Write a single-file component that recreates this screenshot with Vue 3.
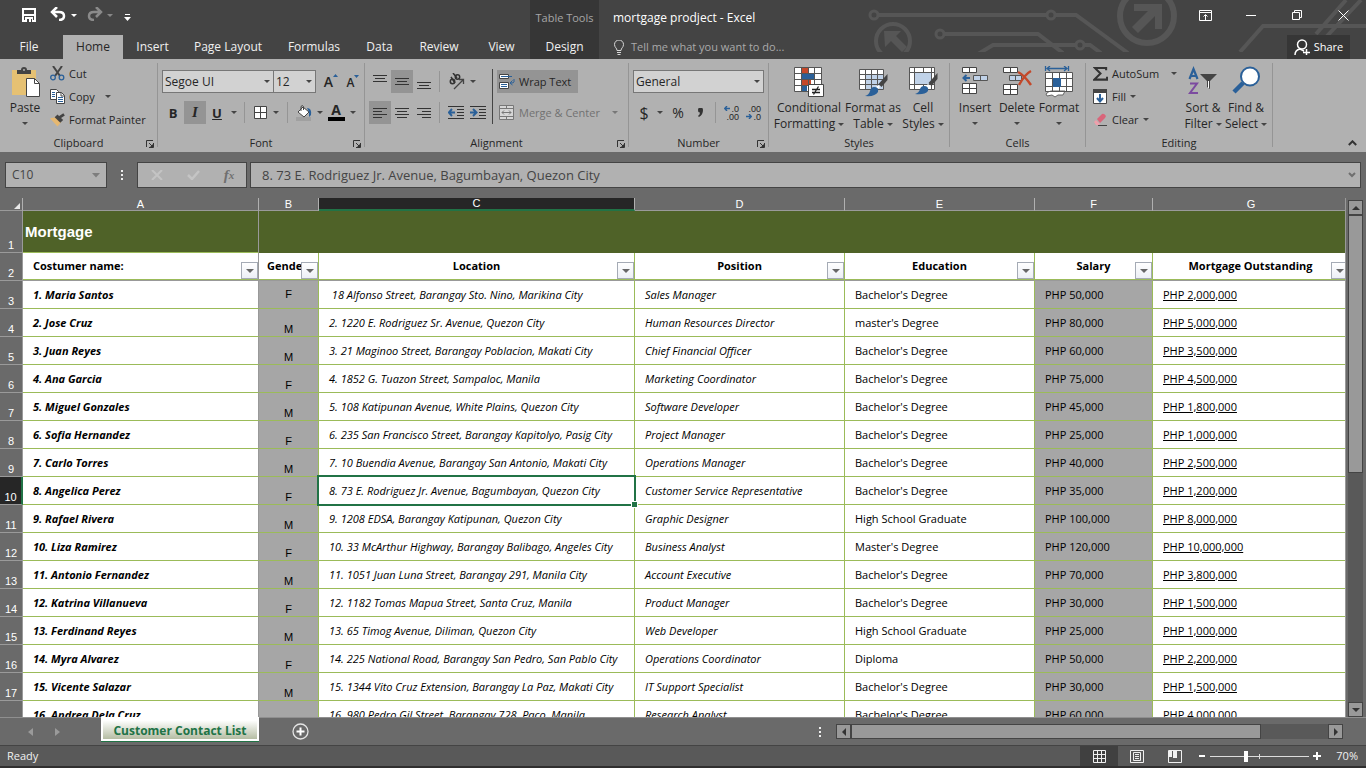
<script setup>
import { ref } from 'vue'

const tabs = [
  { name: 'File', cls: 'file' },
  { name: 'Home', cls: 'home' },
  { name: 'Insert', cls: 'insert' },
  { name: 'Page Layout', cls: 'layout' },
  { name: 'Formulas', cls: 'formulas' },
  { name: 'Data', cls: 'data' },
  { name: 'Review', cls: 'review' },
  { name: 'View', cls: 'view' }
]

const columns = [
  { letter: 'A', title: 'Costumer name:' },
  { letter: 'B', title: 'Gender' },
  { letter: 'C', title: 'Location' },
  { letter: 'D', title: 'Position' },
  { letter: 'E', title: 'Education' },
  { letter: 'F', title: 'Salary' },
  { letter: 'G', title: 'Mortgage Outstanding' }
]

const rows = [
  ['1. Maria Santos', 'F', ' 18 Alfonso Street, Barangay Sto. Nino, Marikina City', 'Sales Manager', "Bachelor's Degree", 'PHP 50,000', 'PHP 2,000,000'],
  ['2. Jose Cruz', 'M', '2. 1220 E. Rodriguez Sr. Avenue, Quezon City', 'Human Resources Director', "master's Degree", 'PHP 80,000', 'PHP 5,000,000'],
  ['3. Juan Reyes', 'M', '3. 21 Maginoo Street, Barangay Poblacion, Makati City', 'Chief Financial Officer', "Bachelor's Degree", 'PHP 60,000', 'PHP 3,500,000'],
  ['4. Ana Garcia', 'F', '4. 1852 G. Tuazon Street, Sampaloc, Manila', 'Marketing Coordinator', "Bachelor's Degree", 'PHP 75,000', 'PHP 4,500,000'],
  ['5. Miguel Gonzales', 'M', '5. 108 Katipunan Avenue, White Plains, Quezon City', 'Software Developer', "Bachelor's Degree", 'PHP 45,000', 'PHP 1,800,000'],
  ['6. Sofia Hernandez', 'F', '6. 235 San Francisco Street, Barangay Kapitolyo, Pasig City', 'Project Manager', "Bachelor's Degree", 'PHP 25,000', 'PHP 1,000,000'],
  ['7. Carlo Torres', 'M', '7. 10 Buendia Avenue, Barangay San Antonio, Makati City', 'Operations Manager', "Bachelor's Degree", 'PHP 40,000', 'PHP 2,500,000'],
  ['8. Angelica Perez', 'F', '8. 73 E. Rodriguez Jr. Avenue, Bagumbayan, Quezon City', 'Customer Service Representative', "Bachelor's Degree", 'PHP 35,000', 'PHP 1,200,000'],
  ['9. Rafael Rivera', 'M', '9. 1208 EDSA, Barangay Katipunan, Quezon City', 'Graphic Designer', 'High School Graduate', 'PHP 100,000', 'PHP 8,000,000'],
  ['10. Liza Ramirez', 'F', '10. 33 McArthur Highway, Barangay Balibago, Angeles City', 'Business Analyst', "Master's Degree", 'PHP 120,000', 'PHP 10,000,000'],
  ['11. Antonio Fernandez', 'M', '11. 1051 Juan Luna Street, Barangay 291, Manila City', 'Account Executive', "Bachelor's Degree", 'PHP 70,000', 'PHP 3,800,000'],
  ['12. Katrina Villanueva', 'F', '12. 1182 Tomas Mapua Street, Santa Cruz, Manila', 'Product Manager', "Bachelor's Degree", 'PHP 30,000', 'PHP 1,500,000'],
  ['13. Ferdinand Reyes', 'M', '13. 65 Timog Avenue, Diliman, Quezon City', 'Web Developer', 'High School Graduate', 'PHP 25,000', 'PHP 1,000,000'],
  ['14. Myra Alvarez', 'F', '14. 225 National Road, Barangay San Pedro, San Pablo City', 'Operations Coordinator', 'Diploma', 'PHP 50,000', 'PHP 2,200,000'],
  ['15. Vicente Salazar', 'M', '15. 1344 Vito Cruz Extension, Barangay La Paz, Makati City', 'IT Support Specialist', "Bachelor's Degree", 'PHP 30,000', 'PHP 1,500,000'],
  ['16. Andrea Dela Cruz', '', '16. 980 Pedro Gil Street, Barangay 728, Paco, Manila', 'Research Analyst', "Bachelor's Degree", 'PHP 60,000', 'PHP 4,000,000']
]

const activeRow = ref(10)
const formula = ref('8. 73 E. Rodriguez Jr. Avenue, Bagumbayan, Quezon City')
const zoom = ref(70)
</script>

<template>
  <div class="excel">
    <header class="head">
      <svg class="circuit" viewBox="866 0 500 52" aria-hidden="true">
        <g fill="none" stroke="#565656" stroke-width="4">
          <g stroke-width="3"><circle cx="874" cy="15" r="4" /><circle cx="940" cy="34" r="4" /><circle cx="1051" cy="15" r="4" /><circle cx="1080" cy="45" r="4" /></g>
          <path d="M878 15H1047M1055 15H1076L1128 53M944 34H1038L1063 53M978 54L993 45H1076M1084 45H1090L1101 53M1240 52L1263 26H1366M1316 34L1346 0M1327 36L1361 0" />
          <circle cx="893" cy="41" r="17" />
          <circle cx="1147" cy="16" r="27" stroke-width="6" />
        </g>
        <path fill="#565656" d="M884 31h17l-5 5 11 11-5 5-11-11-6 6zM1134 4h28v25h-7V16l-17 17-6-6 16-16h-14z" />
      </svg>
      <div class="titlebar">
        <div class="qat">
          <button class="q save" aria-label="Save"><svg width="14" height="14" viewBox="0 0 14 14"><path d="M1 1h12v12H1z" fill="none" stroke="#fff" stroke-width="2" /><path d="M2 7h10" stroke="#fff" stroke-width="2" /><path d="M3 9h8v5H3z" fill="#fff" /><path d="M5 11h2v3H5zM9 11h1v3H9z" fill="#444" /></svg></button>
          <button class="q undo" aria-label="Undo"><svg width="16" height="14" viewBox="0 0 16 14"><path d="M7 0L2 5l5 5" fill="none" stroke="#fff" stroke-width="2.500" /><path d="M2 5h7q5 0 5 4t-5 4" fill="none" stroke="#fff" stroke-width="2.500" /></svg></button>
          <button class="q ar" aria-label="Undo history"><i class="dd lt"></i></button>
          <button class="q redo" aria-label="Redo"><svg width="16" height="14" viewBox="0 0 16 14"><path d="M9 0l5 5-5 5M14 5H7Q2 5 2 9t5 4" fill="none" stroke="#8a8a8a" stroke-width="2.500" /></svg></button>
          <button class="q ar" aria-label="Redo history"><i class="dd dim"></i></button>
          <button class="q cust" aria-label="Customize Quick Access Toolbar"><svg width="7" height="7" viewBox="0 0 7 7"><path d="M1 0h5v1H1zM0 3h7L3.500 7z" fill="#fff" /></svg></button>
        </div>
        <div class="tools">Table Tools</div>
        <div class="doc">mortgage prodject - Excel</div>
        <div class="win">
          <button aria-label="Ribbon Display Options"><svg width="13" height="11" viewBox="0 0 13 11"><path d="M.5.500h12v10H.5zM0 2.500h13M6.500 10V5M4.500 6.500l2-2 2 2" fill="none" stroke="#fff" /></svg></button>
          <button aria-label="Minimize"><svg width="10" height="10" viewBox="0 0 10 10"><path d="M0 5.500h10" stroke="#fff" /></svg></button>
          <button aria-label="Restore"><svg width="10" height="10" viewBox="0 0 10 10"><path d="M.5 2.500h7v7h-7zM2.500 2V.500h7v7H8" fill="none" stroke="#fff" /></svg></button>
          <button aria-label="Close"><svg width="11" height="11" viewBox="0 0 11 11"><path d="M.5.500l10 10M10.500.500l-10 10" stroke="#fff" /></svg></button>
        </div>
      </div>
      <nav class="tabs">
        <button v-for="t in tabs" :key="t.name" class="tab" :class="t.cls">{{ t.name }}</button>
        <button class="tab design">Design</button>
        <button class="tell"><svg width="12" height="15" viewBox="0 0 12 15"><path d="M4 10.500C4 8 1.500 7.500 1.500 4.500a4 4 0 0 1 9 0C10.500 7.500 8 8 8 10.500zM4 12.500h4M4.500 14.500h3" fill="none" stroke="#d8d8d8" /></svg>Tell me what you want to do...</button>
        <button class="share"><svg width="16" height="17" viewBox="0 0 16 17"><circle cx="8" cy="5.500" r="4.500" fill="none" stroke="#fff" stroke-width="1.500" /><path d="M1 16q0-5 5-6l4 2M12.500 10v6M9 13.500h7" fill="none" stroke="#fff" stroke-width="1.500" /></svg>Share</button>
      </nav>
    </header>

    <section class="ribbon">
      <div class="group clip">
        <div class="body">
          <button class="big paste"><svg width="30" height="32" viewBox="0 0 30 32"><path d="M2 4h24v25H2z" fill="#e6c173" /><path d="M7 8V4h4q0-3 3-3t3 3h4v4z" fill="#444" /><circle cx="14" cy="4" r="1" fill="#b1b1b1" /><path d="M16.500 12.500h8l5 5v13h-13z" fill="#fff" stroke="#444" /><path d="M24.500 12.500v5h5" fill="none" stroke="#444" /></svg><span>Paste</span><i class="dd"></i></button>
          <div class="smalls">
            <button class="small"><svg width="15" height="15" viewBox="0 0 15 15"><path d="M3 0l7 10M12 0L5 10" stroke="#444" stroke-width="2" /><circle cx="3" cy="11.500" r="2.300" fill="none" stroke="#2a6099" stroke-width="1.300" /><circle cx="11.500" cy="11.500" r="2.300" fill="none" stroke="#2a6099" stroke-width="1.300" /></svg>Cut</button>
            <button class="small"><svg width="15" height="15" viewBox="0 0 15 15"><path d="M.5.500h6l2 2v8h-8z" fill="#fff" stroke="#444" /><path d="M6.500 3.500h5l3 3v8h-8z" fill="#fff" stroke="#444" /><path d="M11 3.500V7h3.500" fill="none" stroke="#444" /><path d="M2 3.500h3M2 5.500h3M2 7.500h3M8 8.500h5M8 10.500h5M8 12.500h5" stroke="#2a6099" /></svg>Copy<i class="dd gap"></i></button>
            <button class="small"><svg width="16" height="14" viewBox="0 0 16 14"><path d="M0 5l6-1 6 5-4 5z" fill="#e6b871" /><path d="M5 4l3-3 6 6-3 3z" fill="#444" /><path d="M9 5l6-4" stroke="#444" stroke-width="3" /></svg>Format Painter</button>
          </div>
        </div>
        <div class="label">Clipboard<button class="launch" aria-label="Clipboard settings"><svg width="8" height="8" viewBox="0 0 8 8"><path d="M.5 7V.500H7M3 3l3.500 3.500M7.500 3v4.500H3" fill="none" stroke="#333" /><path d="M7 4v3H4z" fill="#333" /></svg></button></div>
      </div>
      <span class="gsep"></span>

      <div class="group font">
        <div class="body rows">
          <div class="row">
            <label class="selwrap fam"><select aria-label="Font"><option>Segoe UI</option></select><i class="dd"></i></label>
            <label class="selwrap size"><select aria-label="Font size"><option>12</option></select><i class="dd"></i></label>
            <button class="ib big-a" aria-label="Increase font size">A<svg width="5" height="3" viewBox="0 0 5 3"><path d="M0 3h5L2.500 0z" fill="#2a6099" /></svg></button>
            <button class="ib small-a" aria-label="Decrease font size">A<svg width="5" height="3" viewBox="0 0 5 3"><path d="M0 0h5L2.500 3z" fill="#2a6099" /></svg></button>
          </div>
          <div class="row">
            <button class="ib b">B</button>
            <button class="ib i on">I</button>
            <button class="ib u">U</button>
            <button class="ab" aria-label="Underline options"><i class="dd"></i></button>
            <span class="vs"></span>
            <button class="ib n20" aria-label="Borders"><svg width="13" height="13" viewBox="0 0 13 13"><path d="M.5.500h12v12H.5zM6.500 1v11M1 6.500h11" fill="#fff" stroke="#444" /></svg></button>
            <button class="ab w12" aria-label="Border options"><i class="dd"></i></button>
            <span class="vs"></span>
            <button class="ib" aria-label="Fill color"><svg width="17" height="16" viewBox="0 0 17 16"><path d="M0 12h15v4H0z" fill="#a0a0a0" /><path d="M2 7l5-5 6 5-5 5z" fill="#fff" stroke="#444" /><path d="M5 6V1.500q1.500-2 2.500 0V5" fill="none" stroke="#444" /><path d="M11 3q5 0 4 7l-2 2V7z" fill="#2a6099" /></svg></button>
            <button class="ab w10" aria-label="Fill color options"><i class="dd"></i></button>
            <button class="ib fc" aria-label="Font color"><span>A</span></button>
            <button class="ab w12" aria-label="Font color options"><i class="dd"></i></button>
          </div>
        </div>
        <div class="label">Font<button class="launch" aria-label="Font settings"><svg width="8" height="8" viewBox="0 0 8 8"><path d="M.5 7V.500H7M3 3l3.500 3.500M7.500 3v4.500H3" fill="none" stroke="#333" /><path d="M7 4v3H4z" fill="#333" /></svg></button></div>
      </div>
      <span class="gsep"></span>

      <div class="group align">
        <div class="body">
          <div class="rows">
            <div class="row">
              <button class="ib" aria-label="Top align"><svg width="14" height="14" viewBox="0 0 14 14"><path d="M0 .500h14M2 3.500h10M0 6.500h14" stroke="#333" /></svg></button>
              <button class="ib on" aria-label="Middle align"><svg width="14" height="14" viewBox="0 0 14 14"><path d="M0 3.500h14M2 6.500h10M0 9.500h14" stroke="#333" /></svg></button>
              <button class="ib" aria-label="Bottom align"><svg width="14" height="14" viewBox="0 0 14 14"><path d="M0 7.500h14M2 10.500h10M0 13.500h14" stroke="#333" /></svg></button>
              <span class="vs a"></span>
              <button class="ib" aria-label="Orientation"><svg width="17" height="17" viewBox="0 0 17 17"><g fill="none" stroke="#333" stroke-width="1.500"><circle cx="4.500" cy="8.500" r="2.200" /><circle cx="9.500" cy="4" r="2.200" /><path d="M3 4l4 6M5 0l4 5" /></g><path d="M6 16L15 7M11 6.500h4.500V11" fill="none" stroke="#444" stroke-width="1.300" /></svg></button>
              <button class="ab" aria-label="Orientation options"><i class="dd"></i></button>
            </div>
            <div class="row">
              <button class="ib on" aria-label="Align left"><svg width="14" height="12" viewBox="0 0 14 12"><path d="M0 1.500h14M0 4.500h9M0 7.500h14M0 10.500h9" stroke="#333" /></svg></button>
              <button class="ib" aria-label="Center"><svg width="14" height="12" viewBox="0 0 14 12"><path d="M0 1.500h14M2 4.500h10M0 7.500h14M2 10.500h10" stroke="#333" /></svg></button>
              <button class="ib" aria-label="Align right"><svg width="14" height="12" viewBox="0 0 14 12"><path d="M0 1.500h14M5 4.500h9M0 7.500h14M5 10.500h9" stroke="#333" /></svg></button>
              <span class="vs a"></span>
              <button class="ib" aria-label="Decrease indent"><svg width="17" height="13" viewBox="0 0 17 13"><path d="M0 .500h16M9 3.500h7M9 6.500h7M9 9.500h7M0 12.500h16" stroke="#333" /><path d="M7 6.500H1M4 3L.800 6.500 4 10" fill="none" stroke="#2a6099" stroke-width="2" /></svg></button>
              <button class="ib" aria-label="Increase indent"><svg width="17" height="13" viewBox="0 0 17 13"><path d="M0 .500h16M9 3.500h7M9 6.500h7M9 9.500h7M0 12.500h16" stroke="#333" /><path d="M0 6.500h6M3 3l3.500 3.500L3 10" fill="none" stroke="#2a6099" stroke-width="2" /></svg></button>
            </div>
          </div>
          <span class="dark"></span>
          <div class="rows wides">
            <button class="wide on"><svg width="16" height="16" viewBox="0 0 16 16"><path d="M.5.500h9v4h-9zM.5 8.500h9v6h-9z" fill="#fff" stroke="#444" /><path d="M2 2.500h11M2 10.500h6M2 12.500h6M15 5v3q0 1-3 1M13.500 6.500L11 9l2.500 2" fill="none" stroke="#2a6099" /></svg>Wrap Text</button>
            <button class="wide off"><svg width="15" height="15" viewBox="0 0 15 15"><path d="M.5.500h14v14H.5zM0 3.500h15M0 11.500h15M7.500 0v3M7.500 12v3" fill="#d6d6d6" stroke="#777" /><path d="M3 7.500h9M5 5.500l-2 2 2 2M10 5.500l2 2-2 2" fill="none" stroke="#777" /></svg>Merge &amp; Center<i class="dd gray"></i></button>
          </div>
        </div>
        <div class="label">Alignment<button class="launch" aria-label="Alignment settings"><svg width="8" height="8" viewBox="0 0 8 8"><path d="M.5 7V.500H7M3 3l3.500 3.500M7.500 3v4.500H3" fill="none" stroke="#333" /><path d="M7 4v3H4z" fill="#333" /></svg></button></div>
      </div>
      <span class="gsep"></span>

      <div class="group number">
        <div class="body rows">
          <div class="row"><label class="selwrap gen"><select aria-label="Number format"><option>General</option></select><i class="dd"></i></label></div>
          <div class="row">
            <button class="ib sym" aria-label="Accounting format">$</button>
            <button class="ab w10" aria-label="Currency options"><i class="dd"></i></button>
            <button class="ib sym pct" aria-label="Percent style">%</button>
            <button class="ib comma" aria-label="Comma style"><svg width="5" height="9" viewBox="0 0 5 9"><path d="M0 2a2.300 2.300 0 0 1 5 0q0 5-4 7l-1-1q2-1.500 2-3.500-2 .500-2-2.500" fill="#333" /></svg></button>
            <span class="vs"></span>
            <button class="ib dec" aria-label="Increase decimal"><span><svg width="6" height="5" viewBox="0 0 6 5"><path d="M6 2.500H1M3 0L.700 2.500 3 5" fill="none" stroke="#2a6099" stroke-width="1.400" /></svg>.0</span><span>.00</span></button>
            <button class="ib dec" aria-label="Decrease decimal"><span>.00</span><span><svg width="6" height="5" viewBox="0 0 6 5"><path d="M0 2.500h5M3 0l2.300 2.500L3 5" fill="none" stroke="#2a6099" stroke-width="1.400" /></svg>.0</span></button>
          </div>
        </div>
        <div class="label">Number<button class="launch" aria-label="Number settings"><svg width="8" height="8" viewBox="0 0 8 8"><path d="M.5 7V.500H7M3 3l3.500 3.500M7.500 3v4.500H3" fill="none" stroke="#333" /><path d="M7 4v3H4z" fill="#333" /></svg></button></div>
      </div>
      <span class="gsep"></span>

      <div class="group styles">
        <div class="body">
          <button class="big w80"><svg width="30" height="32" viewBox="0 0 30 32"><path d="M.5 1.500h27v24H.5z" fill="#fff" /><path d="M8 2h6v5H8zM8 14h9v5H8z" fill="#c4482a" /><path d="M8 20h5v5H8z" fill="#2a6099" /><path d="M.5 1.500h27v24H.5zM1 7.500h26M1 13.500h26M1 19.500h26M7.500 2v23M14.500 2v23M20.500 2v23" fill="none" stroke="#555" /><path d="M8 8h12v5H8z" fill="#2a6099" /><path d="M14.500 18.500h15v12h-15z" fill="#fff" stroke="#444" /><path d="M18 23.500h8M18 26.500h8M24.500 20.500l-5 8" stroke="#222" stroke-width="1.300" /></svg><span>Conditional</span><span>Formatting<i class="dd"></i></span></button>
          <button class="big w48"><svg width="30" height="32" viewBox="0 0 30 32"><path d="M1.500 3.500h24v20h-24z" fill="#fff" /><path d="M8 9h17v14H8z" fill="#c0d2e8" /><path d="M1.500 3.500h24v20h-24zM2 8.500h23M2 13.500h23M2 18.500h23M7.500 4v19M13.500 4v19M19.500 4v19" fill="none" stroke="#555" /><path d="M29.500 8v6l-6 7-3-3z" fill="#444" /><path d="M19 20l2 2" stroke="#fff" stroke-width="3" /><path d="M16 21q5 0 4 5-3 5-13 4 4-1 5-5 1-4 4-4" fill="#2a6099" /></svg><span>Format as</span><span>Table<i class="dd"></i></span></button>
          <button class="big w52"><svg width="30" height="32" viewBox="0 0 30 32"><path d="M1.500 1.500h25v22h-25z" fill="#fff" /><path d="M6 6h17v12H6z" fill="#c0d2e8" /><path d="M1.500 1.500h25v22h-25zM2 6.500h24M2 18.500h24M6.500 2v21M23.500 2v21M15.500 2v4M15.500 19v4" fill="none" stroke="#555" /><path d="M29.500 7v6l-6 7-3-3z" fill="#444" /><path d="M19 19l2 2" stroke="#fff" stroke-width="3" /><path d="M16 20q5 0 4 5-3 4-13 3 4-1 5-5 1-3 4-3" fill="#2a6099" /></svg><span>Cell</span><span>Styles<i class="dd"></i></span></button>
        </div>
        <div class="label">Styles</div>
      </div>
      <span class="gsep"></span>

      <div class="group cells">
        <div class="body">
          <button class="big w42"><svg width="28" height="32" viewBox="0 0 28 32"><path d="M1.500 1.500h14v5h-14zM8.500 1.500v5M1.500 17.500h14v10h-14zM8.500 17.500v10M1.500 22.500h14" fill="#fff" stroke="#444" /><path d="M12.500 9.500h14v5h-14zM19.500 9.500v5" fill="#c0d2e8" stroke="#555" /><path d="M9 12H3M5.500 9L2.500 12l3 3" fill="none" stroke="#2a6099" stroke-width="2" /></svg><span>Insert</span><i class="dd"></i></button>
          <button class="big w42"><svg width="30" height="32" viewBox="0 0 30 32"><path d="M1.500 1.500h14v5h-14zM8.500 1.500v5M1.500 18.500h14v10h-14zM8.500 18.500v10M1.500 23.500h14" fill="#fff" stroke="#444" /><path d="M7.500 9.500h12v5h-12zM13.500 9.500v5" fill="#c0d2e8" stroke="#555" /><path d="M16 6q6 3 13 13M29 5q-6 3-12 14" fill="none" stroke="#c4482a" stroke-width="2.500" /></svg><span>Delete</span><i class="dd"></i></button>
          <button class="big w42"><svg width="30" height="32" viewBox="0 0 30 32"><path d="M1.500 6.500h27v19h-27z" fill="#fff" /><path d="M2 28q3-3 5-3h14l-2 4h-5l-3 2-3-2-5 1z" fill="#fff" stroke="#666" /><path d="M1.500 6.500h27v19h-27zM2 12.500h26M2 20.500h26M8.500 7v18M15.500 7v18M22.500 7v18" fill="none" stroke="#555" /><path d="M9 12h8v9H9z" fill="#2a6099" /><path d="M1.500 0v5M24.500 0v5M3 2.500h20M6 0L3 2.500 6 5M20 0l3 2.500L20 5" fill="none" stroke="#2a6099" stroke-width="1.300" /></svg><span>Format</span><i class="dd"></i></button>
        </div>
        <div class="label">Cells</div>
      </div>
      <span class="gsep"></span>

      <div class="group edit">
        <div class="body">
          <div class="smalls">
            <button class="small"><svg width="16" height="16" viewBox="0 0 16 16"><path d="M14 4V1.500H2L8 7.500l-6.500 6.500H15V11" fill="none" stroke="#333" stroke-width="2.200" /></svg>AutoSum<i class="dd gap"></i></button>
            <button class="small"><svg width="15" height="15" viewBox="0 0 15 15"><path d="M.5.500h13v14H.5z" fill="#fff" stroke="#444" /><path d="M0 0h14v4H0z" fill="#444" /><path d="M7 5v7M4 9l3 3.500L10 9" fill="none" stroke="#2a6099" stroke-width="2" /></svg>Fill<i class="dd near"></i></button>
            <button class="small"><svg width="15" height="14" viewBox="0 0 15 14"><path d="M4 6L9 1q2-1 4 2l-1 2-5 5z" fill="#d9657a" /><path d="M3 7l4 4-1 1H3L1 9z" fill="#eea0ac" /><path d="M5 12.500h9" stroke="#444" /></svg>Clear<i class="dd near"></i></button>
          </div>
          <button class="big w42"><svg width="30" height="32" viewBox="0 0 30 32"><path d="M1.500 13l4-10 4 10M3 10h5" fill="none" stroke="#2a6099" stroke-width="2.200" /><path d="M2 17.500h7L2 27h8" fill="none" stroke="#7c4ba0" stroke-width="2" /><path d="M12 8h17l-7 7v8l-3-2v-6z" fill="#444" /><path d="M20.500 15v7" stroke="#fff" /></svg><span>Sort &amp;</span><span>Filter<i class="dd"></i></span></button>
          <button class="big w44"><svg width="28" height="32" viewBox="0 0 28 32"><path d="M2 26l9-9" stroke="#2a6099" stroke-width="4.500" /><circle cx="18" cy="10.500" r="9" fill="#fff" stroke="#2a6099" stroke-width="2" /></svg><span>Find &amp;</span><span>Select<i class="dd"></i></span></button>
        </div>
        <div class="label">Editing</div>
      </div>
      <span class="gsep"></span>
      <button class="collapse" aria-label="Collapse the Ribbon"><svg width="9" height="6" viewBox="0 0 9 6"><path d="M.8 5L4.500 1.300 8.200 5" fill="none" stroke="#333" stroke-width="2" /></svg></button>
    </section>

    <section class="fbar">
      <label class="name"><input aria-label="Name Box" value="C10"><svg width="8" height="5" viewBox="0 0 8 5"><path d="M0 0h8L4 4.500z" fill="#7d7d7d" /></svg></label>
      <span class="dots"></span>
      <div class="fx">
        <button aria-label="Cancel"><svg width="12" height="10" viewBox="0 0 12 10"><path d="M1 0l10 10M11 0L1 10" stroke="#c4c4c4" stroke-width="2" /></svg></button>
        <button aria-label="Enter"><svg width="13" height="10" viewBox="0 0 13 10"><path d="M1 5l4 4 7-8" fill="none" stroke="#c4c4c4" stroke-width="2.500" /></svg></button>
        <button class="fn" aria-label="Insert Function">f<sub>x</sub></button>
      </div>
      <label class="fin"><input v-model="formula" aria-label="Formula Bar"><svg width="8" height="6" viewBox="0 0 8 6"><path d="M1 1l3 3 3-3" fill="none" stroke="#6f6f6f" stroke-width="2" /></svg></label>
    </section>

    <main class="work">
      <div class="sheet">
        <table>
          <colgroup>
            <col class="c0"><col class="ca"><col class="cb"><col class="cc"><col class="cd"><col class="ce"><col class="cf"><col>
          </colgroup>
          <thead>
            <tr class="letters">
              <th class="corner"><svg width="6" height="6" viewBox="0 0 6 6"><path d="M6 0v6H0z" fill="#e8e8e8" /></svg></th>
              <th v-for="c in columns" :key="c.letter" scope="col" :class="{ sel: c.letter === 'C' }">{{ c.letter }}</th>
            </tr>
          </thead>
          <tbody>
            <tr class="title">
              <th scope="row">1</th>
              <td class="first">Mortgage</td>
              <td colspan="6"></td>
            </tr>
            <tr class="fields">
              <th scope="row">2</th>
              <td v-for="(c, i) in columns" :key="c.letter" :class="'k' + i">
                <div class="cap">{{ c.title }}</div>
                <button class="filter" :aria-label="'Filter ' + c.title"><i></i></button>
              </td>
            </tr>
            <tr v-for="(r, n) in rows" :key="n" :class="{ current: n + 3 === activeRow }">
              <th scope="row">{{ n < 15 ? n + 3 : '' }}</th>
              <td v-for="(v, i) in r" :key="i" :class="['d' + i, { mid: n === 0 }]">{{ v }}<span v-if="i === 2 && n + 3 === activeRow" class="cursor"></span></td>
            </tr>
          </tbody>
        </table>
      </div>
      <div class="vscroll">
        <button aria-label="Scroll up"><i class="tri t-up"></i></button>
        <div class="track"><div class="thumb"></div></div>
        <button aria-label="Scroll down"><i class="tri t-down"></i></button>
      </div>
    </main>

    <section class="sheetbar">
      <button class="nav" aria-label="Previous sheet"><svg width="5" height="8" viewBox="0 0 5 8"><path d="M5 0v8L0 4z" fill="#9a9a9a" /></svg></button>
      <button class="nav" aria-label="Next sheet"><svg width="5" height="8" viewBox="0 0 5 8"><path d="M0 0v8l5-4z" fill="#9a9a9a" /></svg></button>
      <button class="stab">Customer Contact List</button>
      <button class="plus" aria-label="New sheet"><svg width="17" height="17" viewBox="0 0 17 17"><circle cx="8.500" cy="8.500" r="7.500" fill="none" stroke="#e4e4e4" stroke-width="1.300" /><path d="M8.500 4.500v8M4.500 8.500h8" stroke="#fff" stroke-width="2" /></svg></button>
      <div class="hwrap">
        <span class="dots"></span>
        <div class="hscroll">
          <button aria-label="Scroll left"><i class="tri t-left"></i></button>
          <div class="track"><div class="thumb"></div></div>
          <button aria-label="Scroll right"><i class="tri t-right"></i></button>
        </div>
      </div>
    </section>

    <footer class="status">
      <span>Ready</span>
      <div class="right">
        <button class="vw on" aria-label="Normal view"><svg width="13" height="13" viewBox="0 0 13 13"><path d="M.5.500h12v12H.5zM4.500 0v13M8.500 0v13M0 4.500h13M0 8.500h13" fill="none" stroke="#f0f0f0" /></svg></button>
        <button class="vw" aria-label="Page layout view"><svg width="14" height="13" viewBox="0 0 14 13"><path d="M.5.500h13v12H.5zM3.500 2.500h7v8h-7zM5 4.500h4M5 6.500h4M5 8.500h4" fill="none" stroke="#f0f0f0" /></svg></button>
        <button class="vw" aria-label="Page break preview"><svg width="14" height="13" viewBox="0 0 14 13"><path d="M.5.500h13v12H.5z" fill="none" stroke="#f0f0f0" /><path d="M1 1h3v6H1zM5 1h4v7H5z" fill="#f0f0f0" /></svg></button>
        <button class="zm" aria-label="Zoom out"><svg width="6" height="8" viewBox="0 0 6 8"><path d="M0 4h6" stroke="#fff" stroke-width="2" /></svg></button>
        <input v-model="zoom" class="zoom" type="range" min="10" max="180" aria-label="Zoom">
        <button class="zm" aria-label="Zoom in"><svg width="8" height="8" viewBox="0 0 8 8"><path d="M0 4h8M4 0v8" stroke="#fff" stroke-width="2" /></svg></button>
        <span class="pc">{{ zoom }}%</span>
      </div>
    </footer>
  </div>
</template>

<style>
html, body { overflow: hidden; }
</style>

<style scoped>
.excel { height: 100vh; display: flex; flex-direction: column; background: #6a6a6a; color: #262626; font: 11px/16px "Open Sans", "Noto Sans", sans-serif; overflow: hidden; }
.excel *, .excel { box-sizing: border-box; }
button { background: none; border: 0; padding: 0; margin: 0; font: inherit; color: inherit; display: flex; align-items: center; justify-content: center; white-space: nowrap; flex: none; }
input, select { font: inherit; color: inherit; background: none; border: 0; margin: 0; padding: 0; outline: 0; min-width: 0; }
svg { display: block; flex: none; }
.dd { display: block; flex: none; width: 0; height: 0; border: 3px solid transparent; border-top-color: #444; border-bottom: 0; }
.dd.lt { border-top-color: #fff; }
.dd.dim { border-top-color: #888; }
.dd.gray { border-top-color: #777; }

.head { position: relative; background: #444; color: #f0f0f0; flex: none; }
.circuit { position: absolute; top: 0; right: 0; width: 500px; height: 52px; }
.titlebar { position: relative; display: flex; height: 35px; }
.qat { width: 530px; display: flex; align-items: center; padding: 0 0 5px 17px; }
.q { height: 24px; }
.save { width: 24px; }
.undo { width: 33px; }
.ar { width: 12px; padding-left: 1px; }
.qat .ar { margin-left: -7px; }
.redo { width: 30px; margin-left: 1px; }
.qat .undo, .qat .redo { padding-bottom: 2px; }
.qat .cust { width: 24px; padding-top: 4px; }
.tools { width: 69px; background: #363636; color: #a6a6a6; text-align: center; line-height: 36px; white-space: nowrap; }
.doc { flex: 1; padding-left: 14px; line-height: 36px; color: #fff; font-size: 12px; }
.win { display: flex; }
.win button { width: 46px; height: 30px; }
.tabs { position: relative; display: flex; height: 24px; font-size: 12px; }
.tab { height: 24px; }
.file { width: 58px; margin-right: 5px; }
.home { width: 60px; background: #b1b1b1; color: #262626; }
.insert { width: 59px; }
.layout { width: 92px; }
.formulas { width: 80px; }
.data { width: 51px; }
.review { width: 68px; }
.view { width: 57px; }
.design { width: 69px; margin-left: -4px; background: #363636; }
.view { margin-right: 0; }
.tell { color: #aaa; gap: 6px; padding-left: 14px; font-size: 11px; }
.share { margin-left: auto; margin-right: 16px; width: 63px; background: #363636; gap: 4px; color: #fff; font-size: 11px; }
.design { margin-left: 0; }

.ribbon { display: flex; height: 93px; flex: none; background: #b1b1b1; position: relative; }
.group { display: flex; flex-direction: column; flex: none; }
.gsep { width: 1px; height: 84px; margin-top: 4px; background: #959595; flex: none; }
.body { display: flex; height: 75px; }
.label { height: 18px; line-height: 18px; text-align: center; position: relative; }
.launch { position: absolute; right: 3px; top: 6px; }
.big { flex-direction: column; justify-content: flex-start; padding-top: 7px; }
.big svg { margin-bottom: 2px; }
.big span { display: flex; align-items: center; gap: 3px; height: 16px; font-size: 12px; }
.big > .dd { margin-top: 6px; }
.smalls { display: flex; flex-direction: column; padding-top: 3px; }
.small { height: 23px; justify-content: flex-start; gap: 4px; }
.small svg { width: 15px; }
.clip { width: 157px; }
.paste { width: 50px; }
.small .gap { margin-left: 6px; }
.rows { display: flex; flex-direction: column; gap: 8px; padding-top: 11px; }
.wides { align-items: flex-start; }
.row { display: flex; align-items: center; height: 23px; }
.ib { width: 22px; height: 23px; color: #262626; }
.on { background: #949494; }
.ab { width: 11px; height: 23px; }
.w10 { width: 10px; }
.w12 { width: 12px; }
.n20 { width: 20px; }
.vs { width: 1px; height: 21px; margin: 0 5px; background: #959595; }
.vs.a { margin-left: 4px; }
.font { width: 206px; }
.font > .body { padding-left: 4px; }
.selwrap { display: flex; align-items: center; height: 23px; border: 1px solid #777; background: #d2d2d2; padding: 0 3px 0 2px; font-size: 12px; }
.selwrap select { flex: 1; appearance: none; }
.fam { width: 112px; }
.size { width: 43px; margin-left: -1px; }
.big-a { margin-left: 4px; font-size: 14px; font-weight: 600; align-items: flex-start; padding-top: 4px; }
.small-a { font-size: 12px; font-weight: 600; align-items: flex-start; padding-top: 5px; }
.b { font-weight: 700; font-size: 13px; }
.i { font: italic 700 15px "Liberation Serif", serif; }
.u { font-weight: 700; font-size: 13px; text-decoration: underline; }
.fc span { border-bottom: 4px solid #000; width: 17px; height: 17px; line-height: 12px; font-weight: 700; font-size: 14px; }
.align { width: 263px; }
.align > .body > .rows:first-child { padding-left: 4px; width: 127px; }
.dark { width: 1px; height: 55px; margin: 10px 4px 0 0; background: #444; }
.wide { height: 23px; justify-content: flex-start; gap: 4px; padding: 0 7px 0 2px; }
.wide.off { color: #717171; gap: 5px; }
.wide.off .dd { margin-left: 7px; }
.number { width: 139px; }
.number > .body { padding-left: 4px; }
.gen { width: 131px; }
.sym { font-size: 16px; }
.pct { width: 26px; font-size: 14px; }
.comma { width: 19px; }
.dec { flex-direction: column; align-items: flex-end; font: 9px/8px "Liberation Sans", sans-serif; padding-right: 4px; justify-content: center; }
.dec span { display: flex; align-items: center; gap: 1px; }
.styles { width: 180px; }
.w80 { width: 80px; }
.w48 { width: 48px; }
.w52 { width: 52px; }
.w42 { width: 42px; }
.w44 { width: 44px; }
.cells { width: 135px; }
.cells .body { padding-left: 4px; }
.edit { width: 186px; }
.edit .body { padding-left: 7px; }
.edit .smalls { width: 89px; }
.edit .small .gap { margin-left: 8px; }
.small .near { margin-left: 0; }
.collapse { position: absolute; right: 8px; bottom: 4px; width: 12px; height: 10px; }

.fbar { display: flex; align-items: center; padding: 10px 5px; height: 46px; flex: none; }
.name, .fx, .fin { display: flex; align-items: center; height: 26px; background: #b1b1b1; border: 1px solid #444; }
.name { width: 102px; padding: 0 6px; color: #444; font-size: 12px; }
.name input { flex: 1; }
.dots { width: 2px; height: 10px; background: repeating-linear-gradient(#eee 0 2px, transparent 2px 4px); flex: none; }
.fbar .dots { margin: 0 14px; }
.fx { width: 110px; padding-left: 1px; }
.fx button { width: 36px; }
.fn { font: italic 700 15px "Liberation Serif", serif; color: #6f6f6f; }
.fn sub { font-size: 11px; }
.fin { flex: 1; margin-left: 3px; padding: 0 4px 0 11px; font-size: 13px; color: #444; }
.fin input { flex: 1; }

.work { flex: 1; min-height: 0; display: flex; }
.sheet { flex: 1; min-width: 0; overflow: hidden; border-right: 1px solid #999; background: #6a6a6a; }
table { width: 100%; table-layout: fixed; border-collapse: separate; border-spacing: 0; }
.c0 { width: 23px; } .ca { width: 236px; } .cb { width: 60px; } .cc { width: 316px; } .cd { width: 210px; } .ce { width: 190px; } .cf { width: 118px; }
th, td { padding: 0; font-weight: 400; white-space: pre; }
.letters th { height: 13px; line-height: 12px; font-family: "Liberation Sans", sans-serif; font-size: 11px; color: #fff; border-right: 1px solid #b0b0b0; border-bottom: 1px solid #9a9a9a; }
.letters th:last-child { border-right: 0; padding-left: 4px; }
.letters .sel { background: #262626; border-bottom: 2px solid #217346; line-height: 11px; }
.letters .corner svg { margin-left: 14px; margin-top: 3px; }
tbody th { height: 28px; vertical-align: bottom; color: #fff; font: 11px/13px "Liberation Sans", sans-serif; border-right: 1px solid #9a9a9a; border-bottom: 1px solid #9a9a9a; text-align: center; }
.current th { background: #262626; border-right: 2px solid #217346; }
tbody td { height: 28px; background: #fff; color: #000; border-right: 1px solid #9bbb59; border-bottom: 1px solid #9bbb59; font-size: 11px; line-height: 14px; padding-left: 10px; position: relative; }
tbody td:last-child { border-right: 0; }
.title th, .title td { height: 42px; }
.title td { background: #4f6228; color: #fff; font: 700 15px/18px "Liberation Sans", sans-serif; padding-left: 2px; }
.title td:last-child { border-bottom-color: #4f6228; }
.title .first { border-right-color: #999; }
.fields td { height: 28px; box-shadow: inset 0 -1px #9bbb59; border-bottom-color: #999; font-weight: 700; font-size: 11px; text-align: center; padding: 0 0 2px; }
.fields .k0 { text-align: left; padding-left: 10px; border-right-color: #999; }
.fields .cap { overflow: hidden; }
.fields .k1 .cap { padding-left: 8px; text-align: left; }
.fields .k6 .cap { padding-left: 3px; }
.filter { position: absolute; right: 0; bottom: 1px; width: 17px; height: 17px; border: 1px solid #a5abb5; background: linear-gradient(#fff, #eceff5); }
.filter i { border: 4px solid transparent; border-top-color: #666; border-bottom: 0; }
.k6 .filter { right: -3px; }
tbody .d0 { font-weight: 700; font-style: italic; border-right-color: #999; }
tbody .d1 { background: #a6a6a6; text-align: center; padding: 0; vertical-align: bottom; line-height: 13px; font-family: "Liberation Sans", sans-serif; }
tbody .d1.mid { vertical-align: middle; }
.d2, .d3 { font-style: italic; }
tbody .d5 { background: #a6a6a6; }
.d6 { text-decoration: underline; }
.cursor { position: absolute; inset: -2px; border: 2px solid #217346; z-index: 1; }
.cursor::after { content: ""; position: absolute; right: -3px; bottom: -3px; width: 5px; height: 5px; background: #217346; outline: 1px solid #fff; }

.vscroll { width: 20px; padding: 2px 3px 0 2px; display: flex; flex-direction: column; }
.vscroll button, .hscroll button { width: 15px; height: 15px; border: 1px solid #444; background: #999; }
.track { flex: 1; background: #595959; }
.vscroll .thumb { height: 53%; border: 1px solid #444; background: #999; }
.tri { border: 4px solid transparent; }
.t-up { border-top: 0; border-bottom-color: #333; }
.t-down { border-bottom: 0; border-top-color: #333; }
.t-left { border-left: 0; border-right-color: #333; }
.t-right { border-right: 0; border-left-color: #333; }

.sheetbar { display: flex; height: 28px; flex: none; border-top: 1px solid #8f8f8f; align-items: flex-start; padding-left: 17px; }
.nav { width: 27px; height: 27px; }
.stab { margin-left: 30px; height: 24px; margin-top: -1px; padding-top: 5px; width: 158px; border: 2px solid #fff; border-top: 0; box-shadow: 0 1px #217346; background: linear-gradient(#fff 15%, #b5bda3); color: #217346; font-weight: 700; font-size: 12px; }
.plus { margin-left: 33px; height: 27px; }
.hwrap { margin-left: auto; display: flex; align-items: center; height: 27px; width: 547px; gap: 15px; padding-right: 23px; }
.hscroll { flex: 1; display: flex; height: 15px; }
.hscroll .thumb { width: 86%; height: 15px; border: 1px solid #444; background: #999; }

.status { display: flex; align-items: center; height: 23px; flex: none; background: #595959; border-top: 1px solid #444; border-bottom: 2px solid #302f2f; padding: 0 8px 0 7px; color: #f0f0f0; }
.right { margin-left: auto; display: flex; align-items: center; }
.vw { width: 38px; height: 20px; }
.vw.on { background: #404040; }
.zm { width: 16px; height: 20px; }
.zoom { appearance: none; width: 99px; height: 12px; background: linear-gradient(90deg, transparent 49px, #ddd 49px 50px, transparent 50px) center / 100% 5px no-repeat, linear-gradient(#ddd, #ddd) center / 100% 1px no-repeat; }
.zoom::-webkit-slider-thumb { appearance: none; width: 4px; height: 11px; background: #fff; }
.pc { width: 33px; text-align: right; }
</style>
